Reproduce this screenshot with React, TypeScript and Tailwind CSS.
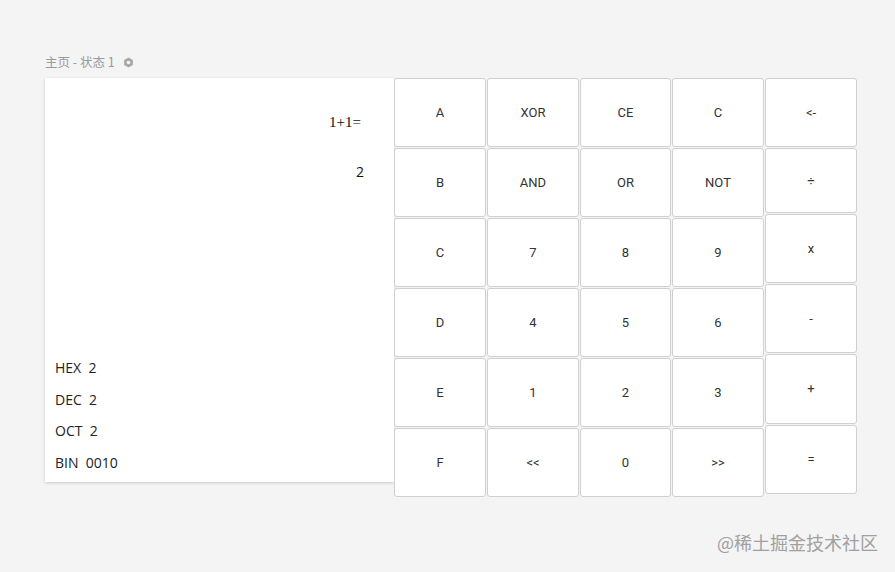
const cols: { label: string; h: string }[][] = [
  ['A', 'B', 'C', 'D', 'E', 'F'].map((l) => ({ label: l, h: 'h-[69px]' })),
  ['XOR', 'AND', '7', '4', '1', '<<'].map((l) => ({ label: l, h: 'h-[69px]' })),
  ['CE', 'OR', '8', '5', '2', '0'].map((l) => ({ label: l, h: 'h-[69px]' })),
  ['C', 'NOT', '9', '6', '3', '>>'].map((l) => ({ label: l, h: 'h-[69px]' })),
  [
    { label: '<-', h: 'h-[69px]' },
    { label: '÷', h: 'h-[65px]' },
    { label: 'x', h: 'h-[69px]' },
    { label: '-', h: 'h-[69px]' },
    { label: '+', h: 'h-[70px]' },
    { label: '=', h: 'h-[69px]' },
  ],
]

const colWidths = ['w-[92px]', 'w-[92px]', 'w-[91px]', 'w-[92px]', 'w-[92px]']

function Key({ label, h }: { label: string; h: string }) {
  return (
    <button
      type="button"
      className={`${h} w-full bg-white border border-[#cfcfcf] rounded-[3px] flex items-center justify-center text-[13px] text-[#333] font-['Roboto',sans-serif]`}
    >
      {label}
    </button>
  )
}

export default function App() {
  return (
    <div className="w-[895px] h-[572px] bg-[#f4f4f4] relative overflow-hidden">
      <div className="pt-[54px] pl-[45px]">
        <div className="flex items-center gap-[8px] h-[16px] text-[12.5px] text-[#9a9a9a] font-['Noto_Sans_CJK_SC',sans-serif]">
          <span>主页 - 状态 1</span>
          <svg width="11" height="11" viewBox="0 0 12 12">
            <polygon points="6,0.5 10.8,3.25 10.8,8.75 6,11.5 1.2,8.75 1.2,3.25" fill="#a8a8a8" />
            <circle cx="6" cy="6" r="2" fill="#f4f4f4" />
          </svg>
        </div>

        <div className="flex mt-[8px] items-start">
          <div className="w-[349px] h-[404px] bg-white shadow-[0_1px_3px_rgba(0,0,0,0.18)] flex flex-col">
            <div className="flex flex-col items-end pr-[33px] pt-[33px] text-[#111] text-[15px] font-['Liberation_Serif',serif]">
              <div className="h-[22px] leading-[22px]">1+1=</div>
              <div className="h-[22px] leading-[22px] mt-[28px] mr-[-3px] font-['Open_Sans',sans-serif] text-[14px]">2</div>
            </div>
            <div className="flex-1" />
            <div className="pl-[10px] pb-[4px] text-[14px] text-[#222] font-['Open_Sans',sans-serif]">
              <div className="h-[31.5px] leading-[31.5px]">HEX&nbsp;&nbsp;2</div>
              <div className="h-[31.5px] leading-[31.5px]">DEC&nbsp;&nbsp;2</div>
              <div className="h-[31.5px] leading-[31.5px]">OCT&nbsp;&nbsp;2</div>
              <div className="h-[31.5px] leading-[31.5px]">BIN&nbsp;&nbsp;0010</div>
            </div>
          </div>

          <div className="flex gap-px">
            {cols.map((col, i) => (
              <div key={i} className={`flex flex-col gap-px ${colWidths[i]}`}>
                {col.map((k, j) => (
                  <Key key={j} label={k.label} h={k.h} />
                ))}
              </div>
            ))}
          </div>
        </div>
      </div>

      <div className="absolute right-[17px] bottom-[16px] text-[18px] text-[#a0a0a0] font-['Noto_Sans_CJK_SC',sans-serif]">
        @稀土掘金技术社区
      </div>
    </div>
  )
}
